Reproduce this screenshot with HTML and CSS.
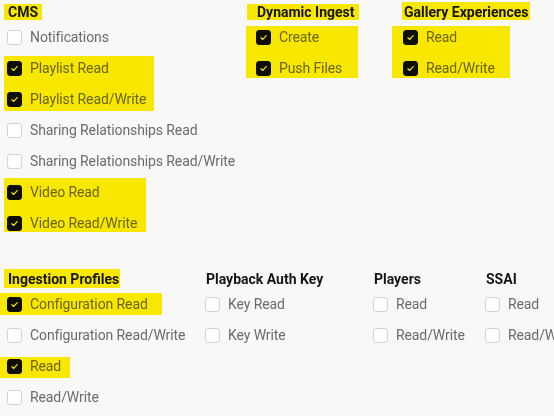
FILE: index.html
```html
<!DOCTYPE html>
<html lang="en">
<head>
<meta charset="utf-8">
<title>Permissions</title>
<link rel="stylesheet" href="styles.css">
</head>
<body>
<div class="page">
  <div class="section cols-top">
    <div class="col">
      <h3 class="heading">CMS</h3>
      <ul class="list">
        <li class="row"><span class="box"></span><span class="label">Notifications</span></li>
        <li class="row"><span class="box checked"><svg viewBox="0 0 15 15"><path d="M4.5 7.8 6.6 9.8 10.6 5.2"/></svg></span><span class="label">Playlist Read</span></li>
        <li class="row"><span class="box checked"><svg viewBox="0 0 15 15"><path d="M4.5 7.8 6.6 9.8 10.6 5.2"/></svg></span><span class="label">Playlist Read/Write</span></li>
        <li class="row"><span class="box"></span><span class="label">Sharing Relationships Read</span></li>
        <li class="row"><span class="box"></span><span class="label">Sharing Relationships Read/Write</span></li>
        <li class="row"><span class="box checked"><svg viewBox="0 0 15 15"><path d="M4.5 7.8 6.6 9.8 10.6 5.2"/></svg></span><span class="label">Video Read</span></li>
        <li class="row"><span class="box checked"><svg viewBox="0 0 15 15"><path d="M4.5 7.8 6.6 9.8 10.6 5.2"/></svg></span><span class="label">Video Read/Write</span></li>
      </ul>
    </div>
    <div class="col">
      <h3 class="heading">Dynamic Ingest</h3>
      <ul class="list">
        <li class="row"><span class="box checked"><svg viewBox="0 0 15 15"><path d="M4.5 7.8 6.6 9.8 10.6 5.2"/></svg></span><span class="label">Create</span></li>
        <li class="row"><span class="box checked"><svg viewBox="0 0 15 15"><path d="M4.5 7.8 6.6 9.8 10.6 5.2"/></svg></span><span class="label">Push Files</span></li>
      </ul>
    </div>
    <div class="col">
      <h3 class="heading">Gallery Experiences</h3>
      <ul class="list">
        <li class="row"><span class="box checked"><svg viewBox="0 0 15 15"><path d="M4.5 7.8 6.6 9.8 10.6 5.2"/></svg></span><span class="label">Read</span></li>
        <li class="row"><span class="box checked"><svg viewBox="0 0 15 15"><path d="M4.5 7.8 6.6 9.8 10.6 5.2"/></svg></span><span class="label">Read/Write</span></li>
      </ul>
    </div>
  </div>

  <div class="section cols-bottom">
    <div class="col">
      <h3 class="heading">Ingestion Profiles</h3>
      <ul class="list">
        <li class="row"><span class="box checked"><svg viewBox="0 0 15 15"><path d="M4.5 7.8 6.6 9.8 10.6 5.2"/></svg></span><span class="label">Configuration Read</span></li>
        <li class="row"><span class="box"></span><span class="label">Configuration Read/Write</span></li>
        <li class="row"><span class="box checked"><svg viewBox="0 0 15 15"><path d="M4.5 7.8 6.6 9.8 10.6 5.2"/></svg></span><span class="label">Read</span></li>
        <li class="row"><span class="box"></span><span class="label">Read/Write</span></li>
      </ul>
    </div>
    <div class="col">
      <h3 class="heading">Playback Auth Key</h3>
      <ul class="list">
        <li class="row"><span class="box"></span><span class="label">Key Read</span></li>
        <li class="row"><span class="box"></span><span class="label">Key Write</span></li>
      </ul>
    </div>
    <div class="col">
      <h3 class="heading">Players</h3>
      <ul class="list">
        <li class="row"><span class="box"></span><span class="label">Read</span></li>
        <li class="row"><span class="box"></span><span class="label">Read/Write</span></li>
      </ul>
    </div>
    <div class="col">
      <h3 class="heading">SSAI</h3>
      <ul class="list">
        <li class="row"><span class="box"></span><span class="label">Read</span></li>
        <li class="row"><span class="box"></span><span class="label">Read/Write</span></li>
      </ul>
    </div>
  </div>

  <!-- highlighter annotations laid over the content -->
  <span class="hl hl-cms"></span>
  <span class="hl hl-playlist"></span>
  <span class="hl hl-video"></span>
  <span class="hl hl-di-head"></span>
  <span class="hl hl-di"></span>
  <span class="hl hl-ge-head"></span>
  <span class="hl hl-ge"></span>
  <span class="hl hl-ip-head"></span>
  <span class="hl hl-conf"></span>
  <span class="hl hl-read"></span>
</div>
</body>
</html>
```

FILE: styles.css
```css
html, body {
  margin: 0;
  padding: 0;
  background: #f8f8f8;
  overflow: hidden;
}

.page {
  position: relative;
  width: 554px;
  height: 416px;
  padding: 3px 0 0 7px;
  box-sizing: border-box;
  font-family: Roboto, "Liberation Sans", sans-serif;
  font-size: 14px;
}

.section {
  display: grid;
}

.cols-top {
  grid-template-columns: 249px 147px auto;
}

.cols-bottom {
  margin-top: 36px;
  grid-template-columns: 198px 168px 112px auto;
}

.col {
  display: flex;
  flex-direction: column;
  gap: 5px;
  min-width: 0;
}

.heading {
  margin: 0 0 0 1px;
  font-size: 14px;
  line-height: 18px;
  font-weight: 700;
  color: #161616;
  white-space: nowrap;
}

.list {
  list-style: none;
  margin: 0;
  padding: 0;
  display: flex;
  flex-direction: column;
  gap: 9px;
}

.row {
  display: flex;
  align-items: center;
  gap: 8px;
  height: 22px;
  white-space: nowrap;
}

.box {
  flex: none;
  width: 15px;
  height: 15px;
  box-sizing: border-box;
  border: 1px solid #d3d3d3;
  border-radius: 3px;
  background: #ffffff;
  display: flex;
}

.box.checked {
  background: #0d0d0d;
  border-color: #0d0d0d;
}

.box svg {
  width: 13px;
  height: 13px;
}

.box path {
  fill: none;
  stroke: #ffffff;
  stroke-width: 1.3;
  stroke-linecap: round;
  stroke-linejoin: round;
}

.label {
  color: #6b6b6b;
  line-height: 22px;
  letter-spacing: -0.1px;
}

/* highlighter marks */
.hl {
  position: absolute;
  background: #ffee00;
  mix-blend-mode: multiply;
}

.hl-cms { left: 4px; top: 4px; width: 38px; height: 16px; }
.hl-playlist { left: 4px; top: 56px; width: 150px; height: 55px; }
.hl-video { left: 4px; top: 178px; width: 142px; height: 54px; }
.hl-di-head { left: 247px; top: 4px; width: 112px; height: 16px; }
.hl-di { left: 246px; top: 26px; width: 112px; height: 52px; }
.hl-ge-head { left: 402px; top: 2px; width: 128px; height: 18px; }
.hl-ge { left: 392px; top: 26px; width: 118px; height: 52px; }
.hl-ip-head { left: 4px; top: 269px; width: 116px; height: 19px; }
.hl-conf { left: 0; top: 293px; width: 162px; height: 22px; }
.hl-read { left: 0; top: 357px; width: 70px; height: 21px; }
```
